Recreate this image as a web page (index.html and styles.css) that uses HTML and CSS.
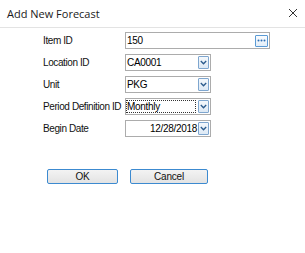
FILE: index.html
```html
<!DOCTYPE html>
<html>
<head>
<meta charset="utf-8">
<link rel="stylesheet" href="styles.css">
</head>
<body>
<div class="dialog">
  <div class="titlebar">
    <span class="title">Add New Forecast</span>
    <svg class="close" width="10" height="10" viewBox="0 0 10 10"><path d="M1 1 L9 9 M9 1 L1 9" stroke="#333" stroke-width="1" fill="none"/></svg>
  </div>
  <div class="form">
    <label class="lbl">Item ID</label>
    <div class="box wide"><span class="val">150</span>
      <span class="ellipsis"><svg width="9" height="3" viewBox="0 0 9 3"><circle cx="1.5" cy="1.5" r="1" fill="#2e6fb4"/><circle cx="4.5" cy="1.5" r="1" fill="#2e6fb4"/><circle cx="7.5" cy="1.5" r="1" fill="#2e6fb4"/></svg></span>
    </div>
    <label class="lbl">Location ID</label>
    <div class="box narrow"><span class="val">CA0001</span><span class="dd"><svg width="7" height="5" viewBox="0 0 7 5"><path d="M0.8 1 L3.5 3.8 L6.2 1" stroke="#2a5a8c" stroke-width="1.3" fill="none"/></svg></span></div>
    <label class="lbl">Unit</label>
    <div class="box narrow"><span class="val">PKG</span><span class="dd"><svg width="7" height="5" viewBox="0 0 7 5"><path d="M0.8 1 L3.5 3.8 L6.2 1" stroke="#2a5a8c" stroke-width="1.3" fill="none"/></svg></span></div>
    <label class="lbl">Period Definition ID</label>
    <div class="box narrow"><span class="val focus">Monthly</span><span class="dd"><svg width="7" height="5" viewBox="0 0 7 5"><path d="M0.8 1 L3.5 3.8 L6.2 1" stroke="#2a5a8c" stroke-width="1.3" fill="none"/></svg></span></div>
    <label class="lbl">Begin Date</label>
    <div class="box narrow"><span class="val right">12/28/2018</span><span class="dd"><svg width="7" height="5" viewBox="0 0 7 5"><path d="M0.8 1 L3.5 3.8 L6.2 1" stroke="#2a5a8c" stroke-width="1.3" fill="none"/></svg></span></div>
  </div>
  <div class="buttons">
    <button class="btn ok">OK</button>
    <button class="btn cancel">Cancel</button>
  </div>
</div>
</body>
</html>
```
FILE: styles.css
```css
html, body {
  margin: 0;
  padding: 0;
  background: #fff;
}
.dialog {
  width: 305px;
  height: 253px;
  font-family: "Liberation Sans", Arial, sans-serif;
  color: #000;
}
.titlebar {
  border-bottom: 1px solid #e3e3e3;
  display: flex;
  align-items: center;
  justify-content: space-between;
  padding: 0 6px 0 7px;
  box-sizing: border-box;
  height: 28px;
}
.title {
  font-family: "Open Sans", "Liberation Sans", sans-serif;
  font-size: 11px;
  color: #1a1a1a;
  margin-top: -1px;
}
.close {
  margin-top: -1px;
  margin-right: 1px;
}
.form {
  display: grid;
  grid-template-columns: 82px auto;
  row-gap: 5px;
  padding: 4px 0 0 43px;
  justify-items: start;
  align-items: center;
}
.lbl {
  font-size: 10px;
  letter-spacing: -0.4px;
  color: #111;
}
.box {
  height: 17px;
  box-sizing: border-box;
  border: 1px solid #acacac;
  display: flex;
  align-items: center;
  background: #fff;
}
.wide { width: 145px; }
.narrow { width: 86px; }
.val {
  font-size: 10px;
  letter-spacing: -0.3px;
  padding-left: 1px;
  flex: 1;
  line-height: 13px;
}
.val.right {
  text-align: right;
  padding-right: 1px;
}
.val.focus {
  border: 1px dotted #333;
  margin: 0 2px 0 0;
  padding-left: 0;
  height: 13px;
  box-sizing: border-box;
  line-height: 11px;
}
.dd {
  width: 11px;
  height: 13px;
  box-sizing: border-box;
  border: 1px solid #7ea6cf;
  border-radius: 1px;
  background: linear-gradient(#f4f8fc, #dde9f5);
  display: flex;
  align-items: center;
  justify-content: center;
  margin-right: 1px;
}
.ellipsis {
  width: 13px;
  height: 12px;
  box-sizing: border-box;
  border: 1px solid #5b9bd5;
  border-radius: 1px;
  background: linear-gradient(#fafcfe, #e3eef9);
  display: flex;
  align-items: center;
  justify-content: center;
  margin-right: 1px;
}
.buttons {
  display: flex;
  padding: 32px 0 0 47px;
  gap: 12px;
}
.btn {
  height: 15px;
  box-sizing: border-box;
  border: 1px solid #3c8ad0;
  border-radius: 2px;
  background: linear-gradient(#f3f3f3, #e3e3e3);
  font-family: "Liberation Sans", Arial, sans-serif;
  font-size: 10px;
  letter-spacing: -0.2px;
  padding: 0;
  color: #111;
  line-height: 12px;
}
.ok { width: 71px; }
.cancel { width: 78px; }
```
